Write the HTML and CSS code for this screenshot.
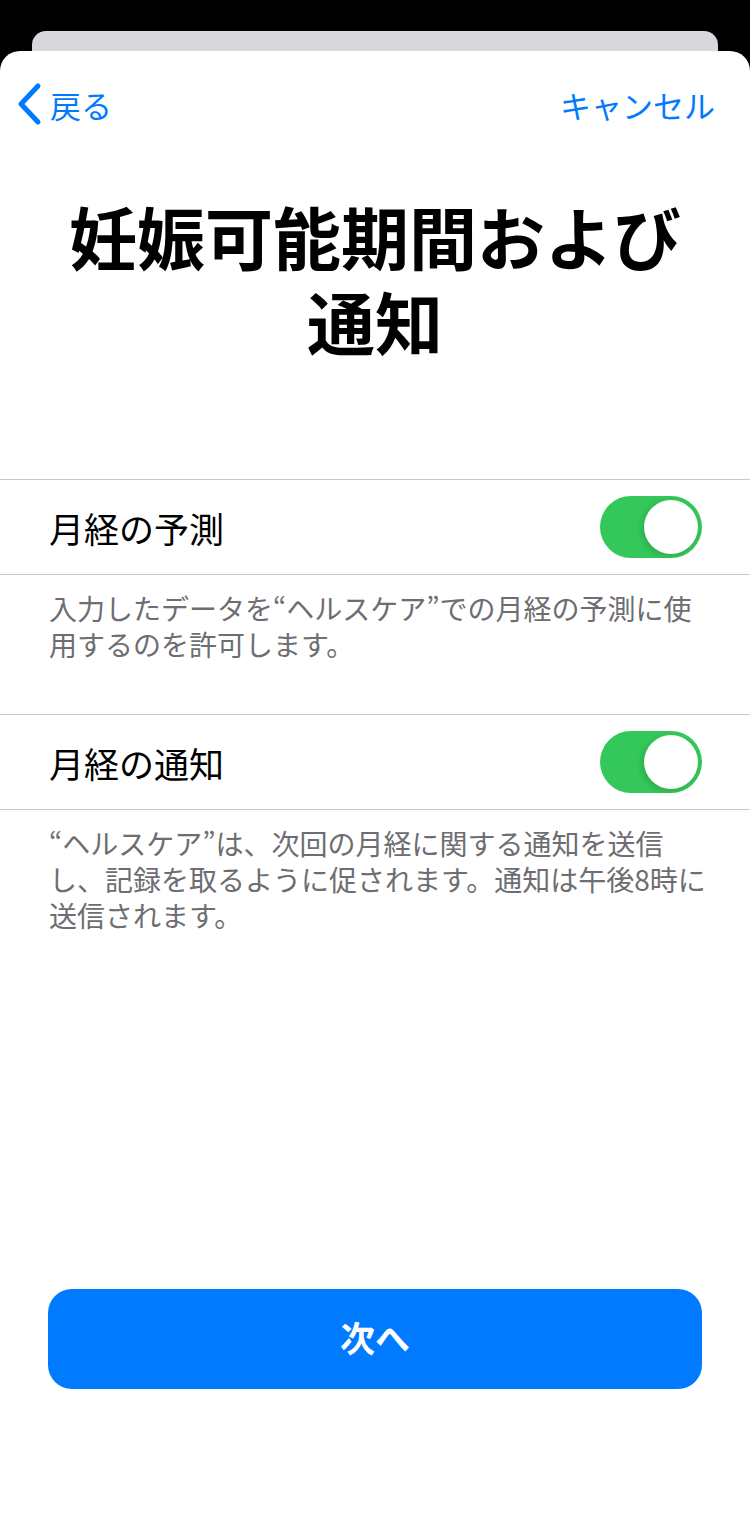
FILE: index.html
```html
<!DOCTYPE html>
<html lang="ja">
<head>
    <meta charset="UTF-8">
    <meta name="viewport" content="width=device-width, initial-scale=1.0">
    <title>妊娠可能期間および通知</title>
    <link rel="stylesheet" href="styles.css">
</head>
<body>

    <div class="card-behind"></div>

    <div class="sheet">

        <div class="nav">
            <a class="nav-back" href="#">
                <svg class="chevron" width="26" height="44" viewBox="0 0 26 44">
                    <path d="M22 4 L5 22 L22 40" fill="none" stroke="#007aff" stroke-width="5" stroke-linecap="round" stroke-linejoin="round"/>
                </svg>
                <span>戻る</span>
            </a>
            <a class="nav-cancel" href="#">キャンセル</a>
        </div>

        <h1 class="title">妊娠可能期間および<br>通知</h1>

        <div class="group group-first">
            <div class="row">
                <span class="row-label">月経の予測</span>
                <div class="toggle on"><div class="knob"></div></div>
            </div>
            <p class="footer-text">入力したデータを“ヘルスケア”での月経の予測に使<br>用するのを許可します。</p>
        </div>

        <div class="group">
            <div class="row">
                <span class="row-label">月経の通知</span>
                <div class="toggle on"><div class="knob"></div></div>
            </div>
            <p class="footer-text">“ヘルスケア”は、次回の月経に関する通知を送信<br>し、記録を取るように促されます。通知は午後8時に<br>送信されます。</p>
        </div>

        <button class="next-btn">次へ</button>

    </div>

</body>
</html>
```

FILE: styles.css
```css
body {
    margin: 0;
    background-color: #000;
    font-family: "Noto Sans CJK JP", "Noto Sans", sans-serif;
    width: 750px;
}

.card-behind {
    height: 20px;
    margin: 31px 32px 0;
    background-color: #d8d8dc;
    border-radius: 14px 14px 0 0;
}

.sheet {
    background-color: #fff;
    border-radius: 20px 20px 0 0;
    min-height: 1489px;
    display: flex;
    flex-direction: column;
    box-sizing: border-box;
    padding-bottom: 151px;
}

.nav {
    display: flex;
    justify-content: space-between;
    align-items: center;
    height: 48px;
    margin-top: 29px;
    padding: 0 35px 0 16px;
}

.nav a {
    color: #007aff;
    text-decoration: none;
    font-size: 31px;
}

.nav-back {
    display: flex;
    align-items: center;
}

.chevron {
    margin-right: 8px;
}

.title {
    margin: 65px 0 0;
    text-align: center;
    font-size: 68px;
    line-height: 85px;
    font-weight: 700;
    color: #000;
}

.group-first {
    margin-top: 116px;
}

.row {
    display: flex;
    justify-content: space-between;
    align-items: center;
    height: 94px;
    padding: 0 48px 0 49px;
    border-top: 1px solid #c8c7cc;
    border-bottom: 1px solid #c8c7cc;
}

.row-label {
    font-size: 35px;
    color: #000;
}

.toggle {
    position: relative;
    width: 102px;
    height: 62px;
    border-radius: 31px;
    background-color: #e9e9eb;
}

.toggle.on {
    background-color: #34c759;
}

.knob {
    position: absolute;
    top: 4px;
    right: 4px;
    width: 54px;
    height: 54px;
    border-radius: 50%;
    background-color: #fff;
    box-shadow: -2px 2px 6px rgba(0, 0, 0, 0.15);
}

.footer-text {
    margin: 0;
    padding: 15px 30px 52px 49px;
    font-size: 28px;
    line-height: 36px;
    color: #6d6d72;
    white-space: nowrap;
}

.next-btn {
    margin: auto 48px 0;
    height: 100px;
    border: none;
    border-radius: 24px;
    background-color: #007aff;
    color: #fff;
    font-family: inherit;
    font-size: 35px;
    font-weight: 700;
    padding-bottom: 6px;
}
```
